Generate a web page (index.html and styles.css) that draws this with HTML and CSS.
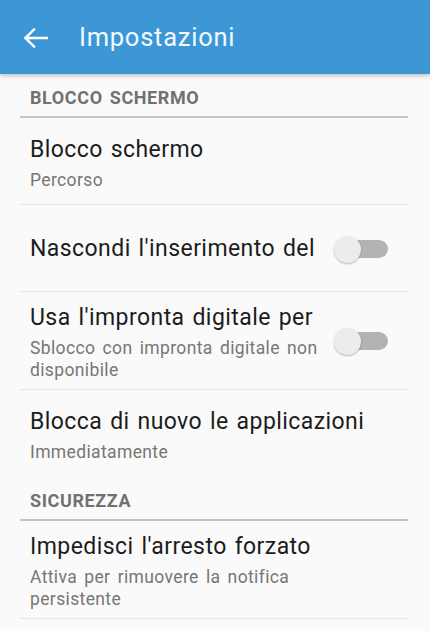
FILE: index.html
```html
<!DOCTYPE html>
<html lang="it">
<head>
<meta charset="utf-8">
<title>Impostazioni</title>
<link rel="stylesheet" href="styles.css">
</head>
<body>
<header class="appbar">
  <svg class="back" width="24" height="20" viewBox="0 0 24 20" aria-hidden="true">
    <path d="M1.5 10H23M10 1.5L1.5 10L10 18.5" fill="none" stroke="#ffffff" stroke-width="2.4" stroke-linecap="square" stroke-linejoin="miter"/>
  </svg>
  <h1 class="appbar-title">Impostazioni</h1>
</header>
<main class="list">
  <div class="section-title">BLOCCO SCHERMO</div>
  <div class="row">
    <div class="text">
      <div class="title">Blocco schermo</div>
      <div class="summary">Percorso</div>
    </div>
  </div>
  <div class="row">
    <div class="text">
      <div class="title">Nascondi l'inserimento del percorso</div>
    </div>
    <div class="switch"><span class="track"></span><span class="thumb"></span></div>
  </div>
  <div class="row">
    <div class="text">
      <div class="title">Usa l'impronta digitale per sbloccare</div>
      <div class="summary">Sblocco con impronta digitale non disponibile</div>
    </div>
    <div class="switch"><span class="track"></span><span class="thumb"></span></div>
  </div>
  <div class="row last">
    <div class="text">
      <div class="title">Blocca di nuovo le applicazioni</div>
      <div class="summary">Immediatamente</div>
    </div>
  </div>
  <div class="section-title">SICUREZZA</div>
  <div class="row">
    <div class="text">
      <div class="title">Impedisci l'arresto forzato</div>
      <div class="summary">Attiva per rimuovere la notifica persistente</div>
    </div>
  </div>
</main>
</body>
</html>
```
FILE: styles.css
```css
html, body {
  margin: 0;
  padding: 0;
}
body {
  background: #fafafa;
  font-family: Roboto, "Noto Sans", sans-serif;
  overflow: hidden;
}
.appbar {
  height: 74px;
  background: #3d97d7;
  display: flex;
  align-items: center;
  box-shadow: 0 2px 4px rgba(0, 0, 0, 0.22);
  position: relative;
  z-index: 1;
}
.back {
  margin-left: 24px;
  margin-top: 2px;
  flex: none;
}
.appbar-title {
  margin: 0 0 0 31px;
  font-size: 25.5px;
  letter-spacing: 0.75px;
  font-weight: 400;
  color: #f4f9fd;
  line-height: 30px;
}
.list {
  margin: 0 22px 0 20px;
}
.section-title {
  padding: 14px 10px 8px;
  font-size: 18px;
  letter-spacing: 0.6px;
  word-spacing: 2px;
  line-height: 20px;
  font-weight: 700;
  color: #717171;
  border-bottom: 2px solid #c6c6c6;
}
.row {
  display: flex;
  align-items: center;
  box-sizing: border-box;
  min-height: 87px;
  padding: 9px 38px 8px 10px;
  border-bottom: 1px solid #e6e6e6;
}
.row.last {
  border-bottom: none;
}
.row .switch {
  margin-right: -18px;
}
.text {
  flex: 1;
  min-width: 0;
}
.title {
  font-size: 23px;
  letter-spacing: 0.43px;
  word-spacing: 1.8px;
  line-height: 33px;
  color: #1c1c1c;
  white-space: nowrap;
  overflow: hidden;
}
.summary {
  padding-top: 3px;
  font-size: 17.5px;
  letter-spacing: 0.37px;
  word-spacing: 2.5px;
  line-height: 22px;
  color: #767676;
}
.switch {
  position: relative;
  flex: none;
  width: 54px;
  height: 28px;
  margin-left: 14px;
}
.track {
  position: absolute;
  left: 16px;
  top: 5px;
  width: 38px;
  height: 18px;
  border-radius: 9px;
  background: #b3b3b3;
}
.thumb {
  position: absolute;
  left: 0;
  top: 1px;
  width: 27px;
  height: 27px;
  border-radius: 50%;
  background: #ececec;
  box-shadow: 0 1px 2px rgba(0, 0, 0, 0.28);
}
```
